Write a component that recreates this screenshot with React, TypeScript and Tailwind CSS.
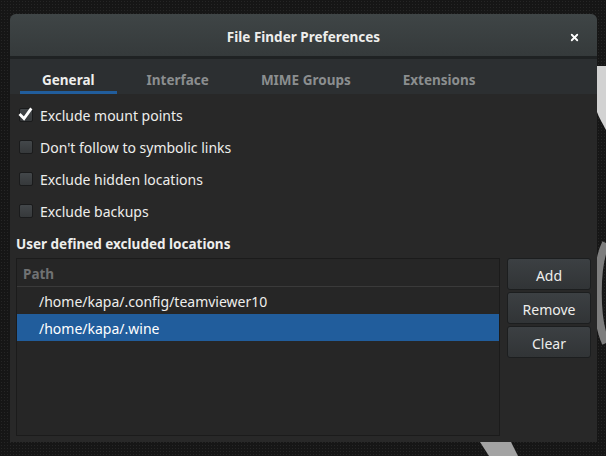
import { X } from "lucide-react";

const options = [
  { label: "Exclude mount points", checked: true },
  { label: "Don't follow to symbolic links", checked: false },
  { label: "Exclude hidden locations", checked: false },
  { label: "Exclude backups", checked: false },
];

const tabs = ["General", "Interface", "MIME Groups", "Extensions"];

const paths = ["/home/kapa/.config/teamviewer10", "/home/kapa/.wine"];

function Checkbox({ checked }: { checked: boolean }) {
  return (
    <span className="relative flex h-[14px] w-[14px] items-center justify-center rounded-[2px] border border-[#1a1b1c] bg-gradient-to-b from-[#43474a] to-[#36393b]">
      {checked && (
        <svg className="absolute -right-[1px] -top-[2px]" width="15" height="15" viewBox="0 0 15 15">
          <path d="M2.5 8 L6 11.5 L12.5 2.5" stroke="#ffffff" strokeWidth="2.8" fill="none" strokeLinecap="square" />
        </svg>
      )}
    </span>
  );
}

function SideButton({ label }: { label: string }) {
  return (
    <button className="h-[32px] w-[84px] rounded-[3px] border border-[#1c1e1f] bg-gradient-to-b from-[#3c4043] to-[#313436] pt-[2px] text-[14px] text-[#eeeeec]">
      {label}
    </button>
  );
}

function Backdrop() {
  return (
    <svg className="absolute inset-0" width="606" height="456" viewBox="0 0 606 456">
      <path d="M597 66 L606 66 L606 130 C 603 124, 599 118, 597 112 Z" fill="#d2d2d2" />
      <path d="M606 243 C 595 265, 595 320, 606 343" stroke="#7e7e7e" strokeWidth="8" fill="none" />
      <path d="M480 442 L511 442 L518 456 L489 456 Z" fill="#a3a3a3" />
    </svg>
  );
}

export default function App() {
  return (
    <div className="relative h-[456px] w-[606px] overflow-hidden bg-[#161616] bg-[radial-gradient(#262626_1px,transparent_1px)] bg-[size:3px_3px] font-['Noto_Sans',sans-serif]">
      <Backdrop />
      <div className="relative ml-[10px] mt-[14px] flex h-[428px] w-[587px] flex-col overflow-hidden rounded-t-[6px] bg-[#282828]">
        <div className="relative flex h-[45px] items-center justify-center border-b-[3px] border-[#1f2223] bg-gradient-to-b from-[#3f4546] to-[#353a3b] pt-[5px]">
          <span className="text-[13.5px] font-bold text-[#eeeeec]">File Finder Preferences</span>
          <X className="absolute right-[17px] top-[18px] h-[11px] w-[11px] text-white" strokeWidth={4} />
        </div>
        <div className="flex h-[35px] gap-2 bg-[#2c2f31] pl-[10px]">
          {tabs.map((tab, i) => (
            <div
              key={tab}
              className={
                i === 0
                  ? "flex items-center border-b-[3px] border-[#215d9c] px-[22px] pt-[11px] text-[13.5px] font-bold text-[#eeeeec]"
                  : "flex items-center px-[22px] pb-[3px] pt-[11px] text-[13.5px] font-bold text-[#8b8e8f]"
              }
            >
              {tab}
            </div>
          ))}
        </div>
        <div className="flex flex-1 flex-col px-[6px] pb-[6px] pt-[5px]">
          <div className="flex flex-col pl-[3px]">
            {options.map((o) => (
              <label key={o.label} className="flex h-[32px] items-center gap-[7px] text-[14px] text-[#eeeeec]">
                <Checkbox checked={o.checked} />
                <span className="pt-[1px]">{o.label}</span>
              </label>
            ))}
          </div>
          <div className="mt-[7px] text-[13.5px] font-bold text-[#eeeeec]">User defined excluded locations</div>
          <div className="mt-[4px] flex flex-1 gap-[7px]">
            <div className="flex flex-1 flex-col border border-[#1b1b1b] bg-[#262626]">
              <div className="flex h-[28px] items-center border-b border-[#3a3a3a] px-[6px] pt-[3px] text-[13.5px] font-bold text-[#707273]">
                Path
              </div>
              {paths.map((p, i) => (
                <div
                  key={p}
                  className={
                    i === 1
                      ? "flex h-[27px] items-center bg-[#215d9c] pl-[22px] pt-[2px] text-[14px] text-white"
                      : "flex h-[27px] items-center pl-[22px] pt-[2px] text-[14px] text-[#eeeeec]"
                  }
                >
                  {p}
                </div>
              ))}
            </div>
            <div className="flex flex-col gap-[2px]">
              <SideButton label="Add" />
              <SideButton label="Remove" />
              <SideButton label="Clear" />
            </div>
          </div>
        </div>
      </div>
    </div>
  );
}
